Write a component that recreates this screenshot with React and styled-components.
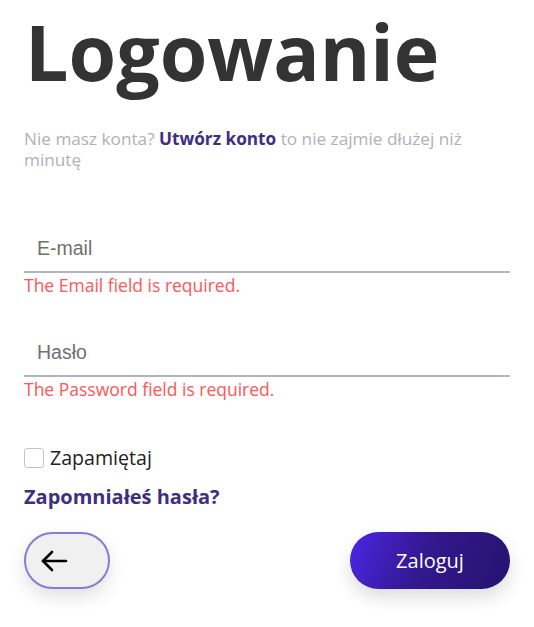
import React from 'react';
import styled, { createGlobalStyle } from 'styled-components';

const GlobalStyle = createGlobalStyle`
    html, body {
        background: #fff;
    }
    body {
        margin: 0;
        font-family: "Open Sans", sans-serif;
    }
`;

const StylePage = styled.div`
    padding: 4px 24px 0;
`;

const StyleTitle = styled.h1`
    font-size: 77px;
    font-weight: 700;
    line-height: 96px;
    color: #333;
    margin: 0 0 28px 1px;
`;

const StyleSubTitle = styled.p`
    font-size: 17.2px;
    line-height: 21px;
    color: #b2b0b8;
    margin: 0;
`;

const StyleSubLink = styled.a`
    color: #3d2e86;
    font-weight: 700;
    text-decoration: none;
`;

const StyleForm = styled.form`
    margin-top: 55px;
`;

const StyleField = styled.div`
    margin-bottom: 32px;
`;

const StyleInput = styled.input`
    display: block;
    box-sizing: border-box;
    width: 100%;
    height: 48px;
    padding: 0 13px;
    border: none;
    border-bottom: 2px solid #b4b4bc;
    outline: none;
    background: transparent;
    font-family: "Liberation Sans", Arial, sans-serif;
    font-size: 19.5px;
    color: #333;

    &::placeholder {
        color: #707070;
    }
`;

const StyleError = styled.div`
    font-size: 17.5px;
    line-height: 24px;
    color: #ff5656;
`;

const StyleCheckRow = styled.label`
    display: flex;
    align-items: center;
    gap: 6px;
    margin-top: 44px;
    font-size: 19.6px;
    line-height: 26px;
    color: #222;
`;

const StyleBox = styled.span`
    width: 18px;
    height: 18px;
    border: 1px solid #c4c4cc;
    border-radius: 3px;
    background: #fff;
`;

const StyleForgot = styled.a`
    display: block;
    margin-top: 12px;
    font-size: 20px;
    line-height: 28px;
    font-weight: 700;
    color: #3d2e86;
    text-decoration: none;
`;

const StyleButtons = styled.div`
    display: flex;
    justify-content: space-between;
    margin-top: 21px;
    padding-bottom: 30px;
`;

const StyleBack = styled.button`
    width: 86px;
    height: 57px;
    box-sizing: border-box;
    border: 2px solid #8a7bd2;
    border-radius: 29px;
    background: #f0f0f0;
    box-shadow: 0 8px 18px rgba(0, 0, 0, 0.12);
    display: flex;
    align-items: center;
    padding-left: 14px;
    cursor: pointer;
`;

const StyleSubmit = styled.button`
    width: 160px;
    height: 57px;
    border: none;
    border-radius: 29px;
    background: linear-gradient(110deg, #4b26e6 0%, #33188f 45%, #25136e 100%);
    box-shadow: 0 8px 18px rgba(0, 0, 0, 0.14);
    color: #fff;
    font-family: "Open Sans", sans-serif;
    font-size: 20px;
    cursor: pointer;
`;

function App() {
    return (
        <StylePage>
            <GlobalStyle />
            <StyleTitle>Logowanie</StyleTitle>
            <StyleSubTitle>
                Nie masz konta? <StyleSubLink href="#">Utwórz konto</StyleSubLink> to nie zajmie dłużej niż minutę
            </StyleSubTitle>
            <StyleForm>
                <StyleField>
                    <StyleInput type="email" placeholder="E-mail" />
                    <StyleError>The Email field is required.</StyleError>
                </StyleField>
                <StyleField>
                    <StyleInput type="password" placeholder="Hasło" />
                    <StyleError>The Password field is required.</StyleError>
                </StyleField>
                <StyleCheckRow>
                    <StyleBox />
                    Zapamiętaj
                </StyleCheckRow>
                <StyleForgot href="#">Zapomniałeś hasła?</StyleForgot>
                <StyleButtons>
                    <StyleBack type="button">
                        <svg width="28" height="24" viewBox="0 0 28 24" fill="none" stroke="#000" strokeWidth="2.6" strokeLinecap="round" strokeLinejoin="round">
                            <path d="M26 12H3" />
                            <path d="M12 3L3 12L12 21" />
                        </svg>
                    </StyleBack>
                    <StyleSubmit type="submit">Zaloguj</StyleSubmit>
                </StyleButtons>
            </StyleForm>
        </StylePage>
    );
}

export default App;
